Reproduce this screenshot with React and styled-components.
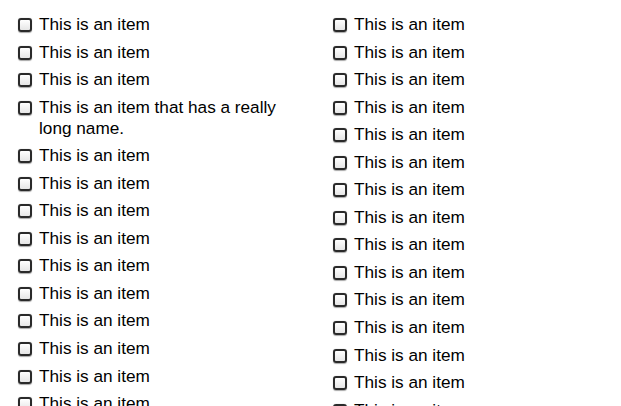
import React from "react";
import styled, { createGlobalStyle } from "styled-components";

const GlobalStyle = createGlobalStyle`
  html, body {
    margin: 0;
    padding: 0;
    background: #ffffff;
    overflow: hidden;
  }
  body {
    font-family: "Liberation Sans", Arial, Helvetica, sans-serif;
  }
`;

const leftItems = [
  "This is an item",
  "This is an item",
  "This is an item",
  "This is an item that has a really long name.",
  ...Array(10).fill("This is an item"),
];

const rightItems = Array(15).fill("This is an item");

const Page = styled.div`
  display: grid;
  grid-template-columns: 285px 1fr;
  column-gap: 30px;
  padding: 14px 0 0 18px;
  height: 406px;
  box-sizing: border-box;
`;

const List = styled.ul`
  list-style: none;
  margin: 0;
  padding: 0;
  display: flex;
  flex-direction: column;
  gap: 6.55px;
`;

const Row = styled.li`
  display: flex;
  align-items: flex-start;
  gap: 7px;
  font-size: 17.2px;
  line-height: 21px;
  color: #000;
`;

const Box = styled.span`
  flex: none;
  width: 10px;
  height: 10px;
  margin-top: 4px;
  border: 2px solid #2a2a2a;
  border-radius: 3px;
  background: linear-gradient(#ffffff, #e6e6e6);
  box-shadow: 0 0.5px 1px rgba(0, 0, 0, 0.35);
`;

const Label = styled.span`
  flex: 1;
`;

const CheckList = ({ items }) => (
  <List>
    {items.map((text, i) => (
      <Row key={i}>
        <Box />
        <Label>{text}</Label>
      </Row>
    ))}
  </List>
);

export default function App() {
  return (
    <>
      <GlobalStyle />
      <Page>
        <CheckList items={leftItems} />
        <CheckList items={rightItems} />
      </Page>
    </>
  );
}
